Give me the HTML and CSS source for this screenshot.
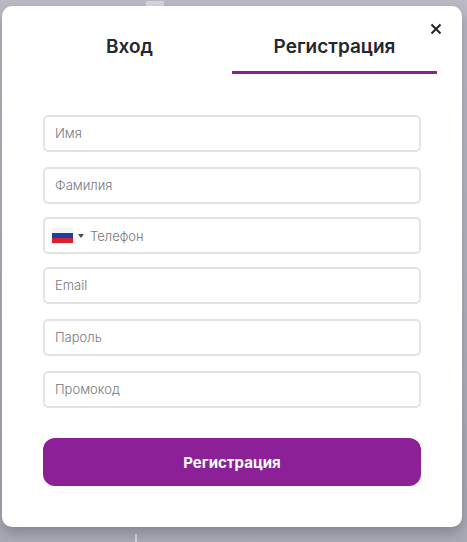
FILE: index.html
```html
<!DOCTYPE html>
<html lang="en">
<head>
  <meta charset="UTF-8" />
  <title>Регистрация</title>
  <link rel="stylesheet" href="styles.css">
</head>
<body>
  <div class="backdrop-mark mark-top"></div>
  <div class="backdrop-mark mark-bottom"></div>

  <div class="modal">
    <button class="close-button" aria-label="Закрыть">
      <svg width="12" height="12" viewBox="0 0 12 12">
        <path d="M1.5 1.5L10.5 10.5M10.5 1.5L1.5 10.5" stroke="#26262e" stroke-width="2.1" fill="none"/>
      </svg>
    </button>

    <div class="tabs">
      <div class="tab">Вход</div>
      <div class="tab active">Регистрация</div>
    </div>

    <form class="form">
      <input class="field" type="text" placeholder="Имя">
      <input class="field" type="text" placeholder="Фамилия">
      <div class="field phone-field">
        <svg class="flag" width="21" height="15" viewBox="0 0 21 15">
          <rect width="21" height="5" fill="#f4f4f4"/>
          <rect y="5" width="21" height="5" fill="#1c3fa8"/>
          <rect y="10" width="21" height="5" fill="#d8202c"/>
        </svg>
        <span class="caret"></span>
        <input class="phone-input" type="text" placeholder="Телефон">
      </div>
      <input class="field field-email" type="text" placeholder="Email">
      <input class="field" type="text" placeholder="Пароль">
      <input class="field" type="text" placeholder="Промокод">
      <button class="submit-button" type="button">Регистрация</button>
    </form>
  </div>
</body>
</html>
```

FILE: styles.css
```css
* {
  box-sizing: border-box;
}

html,
body {
  height: 100%;
}

body {
  margin: 0;
  padding: 6px 5px 0 2px;
  overflow: hidden;
  font-family: 'Inter', 'Noto Sans', sans-serif;
  background: linear-gradient(to bottom, #bcbac6, #b4b5c0 50%, #a9abb6);
  color: #26262e;
}

.backdrop-mark {
  position: absolute;
  background: #d6d7df;
}

.mark-top {
  top: 1px;
  left: 146px;
  width: 18px;
  height: 5px;
}

.mark-bottom {
  top: 534px;
  left: 135px;
  width: 2px;
  height: 8px;
}

.modal {
  position: relative;
  height: 521px;
  padding: 0 41px;
  background-color: white;
  border-radius: 10px;
  box-shadow: 0 6px 14px rgba(60, 60, 75, 0.35);
}

.close-button {
  position: absolute;
  top: 17px;
  right: 20px;
  width: 12px;
  height: 12px;
  padding: 0;
  display: flex;
  background: none;
  border: none;
  cursor: pointer;
}

.tabs {
  display: flex;
  margin: 0 -16px;
  height: 68px;
}

.tab {
  flex: 1;
  padding-top: 28px;
  font-size: 19px;
  font-weight: 600;
  line-height: 26px;
  text-align: center;
}

.tab.active {
  border-bottom: 3px solid #8b2097;
}

.form {
  display: flex;
  flex-direction: column;
  padding-top: 41px;
}

.field {
  width: 100%;
  height: 37px;
  padding: 0 10px 1px;
  font-family: inherit;
  font-size: 13px;
  font-weight: 300;
  color: #26262e;
  background: white;
  border: 2px solid #e4e4e6;
  border-radius: 5px;
  outline: none;
}

.field + .field {
  margin-top: 15px;
}

.field::placeholder,
.phone-input::placeholder {
  color: #77777d;
}

.form .phone-field {
  display: flex;
  align-items: center;
  margin-top: 13px;
  padding: 0 7px;
}

.form .field-email {
  margin-top: 13px;
}

.flag {
  flex-shrink: 0;
}

.caret {
  margin-left: 5px;
  border-top: 4px solid #4c4c52;
  border-left: 3px solid transparent;
  border-right: 3px solid transparent;
}

.phone-input {
  flex: 1;
  min-width: 0;
  margin-left: 6px;
  padding: 0;
  font-family: inherit;
  font-size: 13px;
  font-weight: 300;
  border: none;
  outline: none;
}

.submit-button {
  height: 48px;
  margin-top: 30px;
  font-family: inherit;
  font-size: 15px;
  font-weight: 700;
  color: white;
  background-color: #8b2097;
  border: none;
  border-radius: 12px;
  cursor: pointer;
}
```
